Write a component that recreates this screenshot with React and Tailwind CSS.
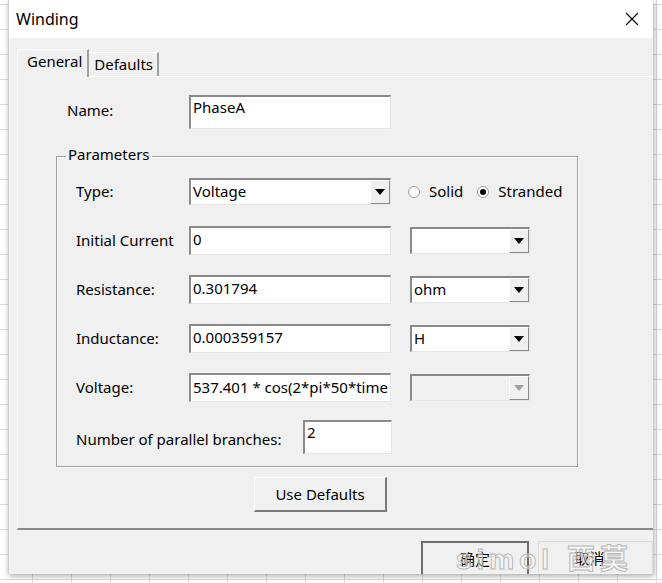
import React from 'react';

const font = { fontFamily: '"Noto Sans", "Open Sans", "Noto Sans CJK SC", sans-serif' };

function Sunken({ className = '', children }) {
  return (
    <div className={`bg-white border-t-2 border-l-2 border-b border-r border-t-[#8a8a8a] border-l-[#8a8a8a] border-b-[#e6e6e6] border-r-[#e6e6e6] ${className}`}>
      {children}
    </div>
  );
}

function Arrow({ disabled }) {
  return (
    <div className="w-[20px] h-full bg-[#f0f0f0] border-l border-t border-l-[#fdfdfd] border-t-[#fdfdfd] border-r border-b border-r-[#8a8a8a] border-b-[#8a8a8a] flex items-center justify-center shrink-0">
      <svg width="10" height="6" viewBox="0 0 10 6"><path d="M0 0h10L5 6z" fill={disabled ? '#a0a0a0' : '#000'} /></svg>
    </div>
  );
}

function Combo({ value, width, disabled }) {
  return (
    <div className={`flex h-[27px] border-t-2 border-l-2 border-b border-r border-t-[#8a8a8a] border-l-[#8a8a8a] border-b-[#e6e6e6] border-r-[#e6e6e6] ${disabled ? 'bg-[#f0f0f0]' : 'bg-white'}`} style={{ width }}>
      <div className="flex-1 pl-[2px] leading-[23px] text-[15px] text-black">{value}</div>
      <Arrow disabled={disabled} />
    </div>
  );
}

function Radio({ checked, label }) {
  return (
    <div className="flex items-center">
      <div className="w-[12px] h-[12px] rounded-full bg-white border border-[#9a9a9a] flex items-center justify-center">
        {checked && <div className="w-[6px] h-[6px] rounded-full bg-black" />}
      </div>
      <span className="ml-[9px] text-[15px]">{label}</span>
    </div>
  );
}

function Row({ label, children, unit }) {
  return (
    <div className="h-[49px] flex items-center">
      <div className="w-[132px] pl-[19px] shrink-0 text-[15px] text-black whitespace-nowrap">{label}</div>
      {children}
      {unit && <div className="ml-[19px]">{unit}</div>}
    </div>
  );
}

export default function App() {
  return (
    <div
      className="w-[662px] h-[583px] overflow-hidden bg-white bg-[linear-gradient(#dcdcdc_1px,transparent_1px),linear-gradient(90deg,#dcdcdc_1px,transparent_1px)] bg-[size:39px_25px] bg-[position:-7px_4px] relative"
      style={font}
    >
      <div className="ml-[8px] w-[645px] h-[574px] bg-[#f0f0f0] shadow-[1px_2px_6px_rgba(0,0,0,0.35)] border-l border-[#cfcfcf] relative overflow-hidden">
        {/* title bar */}
        <div className="h-[38px] bg-white flex items-center justify-between pl-[7px] pr-[14px]">
          <span className="text-[16px] text-black">Winding</span>
          <svg width="14" height="14" viewBox="0 0 14 14"><path d="M1 1l12 12M13 1L1 13" stroke="#000" strokeWidth="1.2" /></svg>
        </div>

        {/* tabs */}
        <div className="pt-[11px] pl-[8px]">
          <div className="flex items-end h-[27px]">
            <div className="h-[28px] pl-[9px] pr-[5px] bg-[#f0f0f0] border-t border-l border-white border-r-2 border-r-[#a0a0a0] text-[15px] leading-[22px] relative z-10 -mb-[1px]">General</div>
            <div className="h-[24px] pl-[5px] pr-[4px] border-t border-white border-r-2 border-r-[#a0a0a0] text-[15px] leading-[22px]">Defaults</div>
          </div>
          <div className="h-[454px] border-t border-l border-white border-b-2 border-b-[#8a8a8a] relative">
            <div className="pt-[18px] flex items-start">
              <div className="w-[171px] pl-[49px] pt-[4px] text-[15px]">Name:</div>
              <Sunken className="w-[202px] h-[34px] pl-[2px] text-[15px] leading-[20px]">PhaseA</Sunken>
            </div>

            {/* Parameters group */}
            <div className="ml-[38px] mt-[27px] w-[522px] h-[311px] border border-[#a0a0a0] shadow-[inset_1px_1px_0_#fff,1px_1px_0_#fff] relative">
              <div className="absolute -top-[14px] left-[9px] px-[2px] bg-[#f0f0f0] text-[15px]">Parameters</div>
              <div className="pt-[10px]">
                <Row label="Type:">
                  <Combo value="Voltage" width={202} />
                  <div className="ml-[17px] flex items-center gap-[14px]">
                    <Radio label="Solid" />
                    <Radio checked label="Stranded" />
                  </div>
                </Row>
                <Row label="Initial Current" unit={<Combo value="" width={120} />}>
                  <Sunken className="w-[202px] h-[29px] pl-[2px] text-[15px] leading-[22px]">0</Sunken>
                </Row>
                <Row label="Resistance:" unit={<Combo value="ohm" width={120} />}>
                  <Sunken className="w-[202px] h-[29px] pl-[2px] text-[15px] leading-[22px]">0.301794</Sunken>
                </Row>
                <Row label="Inductance:" unit={<Combo value="H" width={120} />}>
                  <Sunken className="w-[202px] h-[29px] pl-[2px] text-[15px] leading-[22px]">0.000359157</Sunken>
                </Row>
                <Row label="Voltage:" unit={<Combo value="" width={120} disabled />}>
                  <Sunken className="w-[202px] h-[29px] pl-[2px] text-[15px] leading-[24px] overflow-hidden whitespace-nowrap">537.401 * cos(2*pi*50*time</Sunken>
                </Row>
                <div className="h-[49px] flex items-center">
                  <div className="w-[246px] pl-[19px] text-[15px] pt-[6px] whitespace-nowrap">Number of parallel branches:</div>
                  <Sunken className="w-[89px] h-[34px] pl-[2px] text-[15px] leading-[20px]">2</Sunken>
                </div>
              </div>
            </div>

            <div className="mt-[10px] ml-[236px] w-[133px] h-[35px] bg-[#f0f0f0] border border-t-white border-l-white border-r-2 border-b-2 border-r-[#7a7a7a] border-b-[#7a7a7a] text-[15px] flex items-center justify-center">
              Use Defaults
            </div>
          </div>
        </div>

        {/* bottom buttons */}
        <div className="mt-[11px] flex gap-[9px] pl-[412px]">
          <div className="w-[113px] h-[40px] border-2 border-[#6e6e6e] border-b-0 flex justify-center pt-[5px] text-[15px]">确定</div>
          <div className="w-[120px] h-[40px] border border-[#dcdcdc] border-b-0 flex justify-center pt-[5px] pr-[12px] text-[15px]">取消</div>
        </div>
        <div className="absolute left-[447px] top-[539px] text-[28px] font-bold tracking-[5px] text-white/40 [-webkit-text-stroke:1px_#b8b8b8] pointer-events-none" style={{ fontFamily: '"Liberation Sans", "Noto Sans CJK SC", sans-serif' }}>
          simol 西莫
        </div>
      </div>
    </div>
  );
}
